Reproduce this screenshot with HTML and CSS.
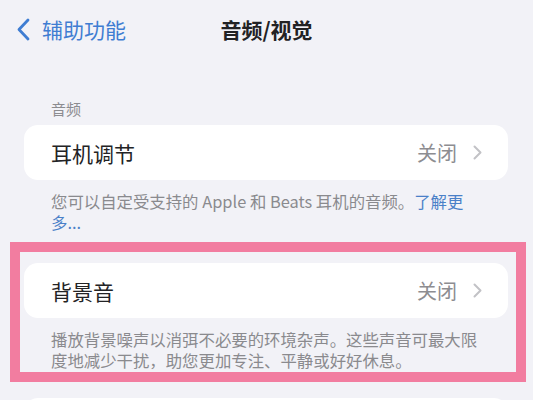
FILE: index.html
```html
<!DOCTYPE html>
<html lang="zh-CN">
<head>
<meta charset="utf-8">
<title>音频/视觉</title>
<link rel="stylesheet" href="styles.css">
</head>
<body>
<header class="nav">
  <a class="back" href="#">
    <svg class="back-icon" width="14" height="23" viewBox="0 0 14 23" aria-hidden="true">
      <path d="M12 2 L3 11.5 L12 21" fill="none" stroke="currentColor" stroke-width="2.8" stroke-linecap="round" stroke-linejoin="round"/>
    </svg>
    <span>辅助功能</span>
  </a>
  <h1 class="title">音频/视觉</h1>
  <div></div>
</header>

<main>
  <div class="group-label">音频</div>
  <section class="group">
    <div class="card">
      <span class="row-label">耳机调节</span>
      <span class="row-value">关闭
        <svg class="chev" width="9" height="15" viewBox="0 0 9 15" aria-hidden="true"><path d="M1.5 1.5 L7.5 7.5 L1.5 13.5" fill="none" stroke="currentColor" stroke-width="2" stroke-linecap="round" stroke-linejoin="round"/></svg>
      </span>
    </div>
    <p class="footer"><span class="line">您可以自定受支持的 Apple 和 Beats 耳机的音频。<a class="link" href="#">了解更</a></span><span class="line"><a class="link" href="#">多...</a></span></p>
  </section>

  <section class="group highlight">
    <div class="card">
      <span class="row-label">背景音</span>
      <span class="row-value">关闭
        <svg class="chev" width="9" height="15" viewBox="0 0 9 15" aria-hidden="true"><path d="M1.5 1.5 L7.5 7.5 L1.5 13.5" fill="none" stroke="currentColor" stroke-width="2" stroke-linecap="round" stroke-linejoin="round"/></svg>
      </span>
    </div>
    <p class="footer">播放背景噪声以消弭不必要的环境杂声。这些声音可最大限度地减少干扰，助您更加专注、平静或好好休息。</p>
  </section>

  <section class="group next">
    <div class="card"></div>
  </section>
</main>
</body>
</html>
```

FILE: styles.css
```css
* { box-sizing: border-box; }
html, body {
  margin: 0;
  padding: 0;
  background: #f2f2f7;
  height: 400px;
  overflow: hidden;
}
body {
  font-family: "Noto Sans CJK SC", "Noto Sans", sans-serif;
  color: #1f1f21;
}
.nav {
  height: 58px;
  display: grid;
  grid-template-columns: 1fr auto 1fr;
  align-items: center;
}
.back {
  display: flex;
  align-items: center;
  gap: 12px;
  padding-left: 16px;
  color: #3f7dd2;
  text-decoration: none;
  font-size: 21px;
  line-height: 24px;
}
.back-icon { display: block; margin-top: 1px; }
.title {
  margin: 0;
  font-size: 21px;
  line-height: 24px;
  font-weight: 700;
  color: #222224;
}
.group-label {
  margin-top: 41px;
  padding-left: 51px;
  font-size: 15px;
  line-height: 20px;
  color: #8c8c90;
}
.group {
  margin-top: 6px;
}
.card {
  margin-left: 24px;
  margin-right: 25px;
  height: 55px;
  background: #ffffff;
  border-radius: 14px;
  display: flex;
  align-items: center;
  justify-content: space-between;
  padding: 0 26px 0 27px;
}
.row-label {
  font-size: 21px;
  line-height: 24px;
  color: #232325;
}
.row-value {
  display: flex;
  align-items: center;
  gap: 16px;
  font-size: 20px;
  line-height: 24px;
  color: #8d8d91;
}
.chev { color: #c2c2c6; display: block; }
.footer {
  margin: 11px 0 0 0;
  padding: 0 52px 0 51px;
  font-size: 16.4px;
  line-height: 20.5px;
  color: #8a8a8e;
}
.footer .line { display: block; white-space: nowrap; }
.link { color: #4a80c8; text-decoration: none; }
.group.highlight {
  margin-top: 31px;
  position: relative;
}
.group.highlight::after {
  content: "";
  position: absolute;
  top: -21px;
  left: 10px;
  right: 7px;
  bottom: -12px;
  border: 10px solid #f27da0;
  pointer-events: none;
}
.group.next { margin-top: 28px; }
```
